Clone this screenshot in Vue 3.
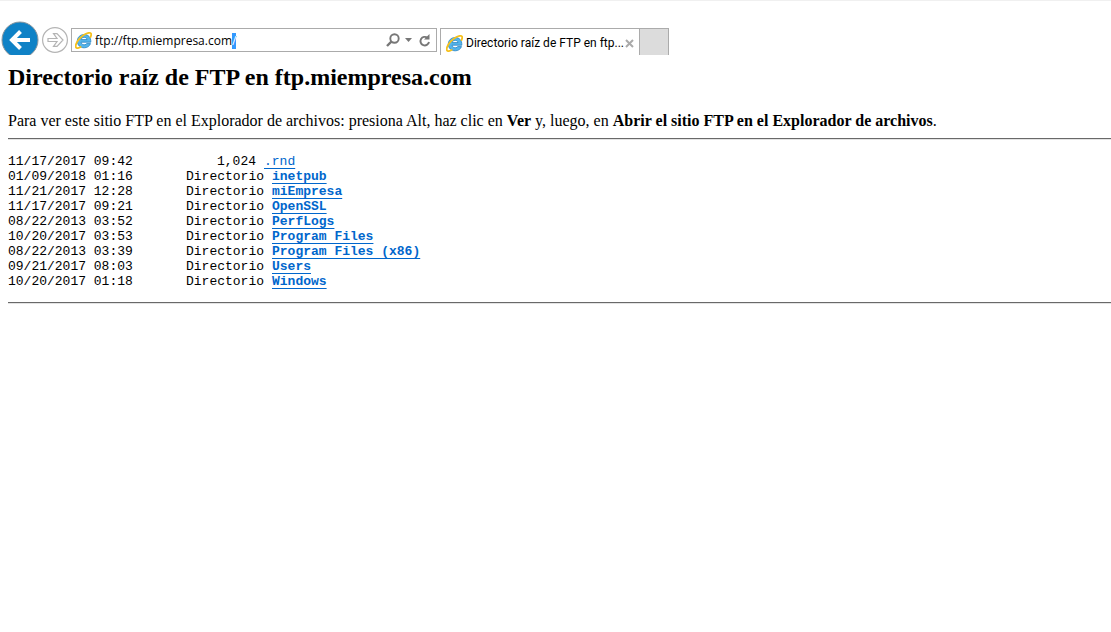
<script setup>
import { onMounted, ref } from 'vue'

const address = ref('ftp://ftp.miempresa.com/')
const addressBox = ref(null)

const entries = [
  { date: '11/17/2017 09:42', size: '1,024', name: '.rnd', file: true },
  { date: '01/09/2018 01:16', size: 'Directorio', name: 'inetpub' },
  { date: '11/21/2017 12:28', size: 'Directorio', name: 'miEmpresa' },
  { date: '11/17/2017 09:21', size: 'Directorio', name: 'OpenSSL' },
  { date: '08/22/2013 03:52', size: 'Directorio', name: 'PerfLogs' },
  { date: '10/20/2017 03:53', size: 'Directorio', name: 'Program Files' },
  { date: '08/22/2013 03:39', size: 'Directorio', name: 'Program Files (x86)' },
  { date: '09/21/2017 08:03', size: 'Directorio', name: 'Users' },
  { date: '10/20/2017 01:18', size: 'Directorio', name: 'Windows' }
]

onMounted(() => {
  const box = addressBox.value
  box.focus()
  box.setSelectionRange(address.value.length - 1, address.value.length)
})
</script>

<template>
  <div class="browser">
    <svg class="defs" width="0" height="0" aria-hidden="true">
      <symbol id="ie-logo" viewBox="0 0 17 17">
        <path d="M15.800 10.200H6.100c.1 1.600 1.400 2.600 3.100 2.600 1.100 0 2-.4 2.500-1.200h3.800c-.9 2.600-3.300 4.200-6.300 4.200-4 0-6.900-2.700-6.900-6.600s2.900-6.700 6.900-6.700c4.200 0 6.900 3 6.600 7.700zM12 7.600c-.2-1.400-1.300-2.300-2.900-2.300S6.400 6.200 6.200 7.600z" fill="#55b5ea" stroke="#2583c4" stroke-width=".8" />
        <path d="M15.500 5c1-2 1-3.500-.2-4C13.200.200 8 2.600 4.500 6.600 1.100 10.400-.1 14.500 1.300 15.800c.9.700 2.600.2 4.300-.8" fill="none" stroke="#f6c01c" stroke-width="1.800" stroke-linecap="round" />
      </symbol>
    </svg>

    <header class="toolbar">
      <button class="nav back" type="button" aria-label="Atrás">
        <svg width="38" height="38" viewBox="0 0 38 38">
          <circle cx="19" cy="19" r="18" fill="#0f82c6" stroke="#8c979e" />
          <path d="M11 19h18M19.500 10.500L11 19l8.500 8.500" fill="none" stroke="#fff" stroke-width="4" />
        </svg>
      </button>
      <button class="nav forward" type="button" aria-label="Adelante">
        <svg width="26" height="26" viewBox="0 0 26 26">
          <circle cx="13" cy="13" r="12.400" fill="#fff" stroke="#b4b4b4" stroke-width="1.200" />
          <path d="M6 11.500h9l-3.500-4.800h3.500l6 6.300-6 6.300h-3.500l3.500-4.800H6z" fill="#fff" stroke="#b4b4b4" stroke-width="1.200" />
        </svg>
      </button>

      <div class="address">
        <svg class="logo" width="17" height="17"><use href="#ie-logo" /></svg>
        <input ref="addressBox" v-model="address" type="text" aria-label="Dirección" spellcheck="false" />
        <button class="tool search" type="button" aria-label="Buscar">
          <svg width="14" height="14" viewBox="0 0 14 14" fill="none" stroke="#777">
            <circle cx="8.500" cy="5.500" r="4.200" stroke-width="1.900" />
            <path d="M5.600 8.400L1 13" stroke-width="2.400" />
          </svg>
        </button>
        <button class="tool drop" type="button" aria-label="Mostrar opciones">
          <svg width="7" height="4" viewBox="0 0 7 4"><path d="M0 0h7L3.500 4z" fill="#777" /></svg>
        </button>
        <button class="tool reload" type="button" aria-label="Actualizar">
          <svg width="12" height="13" viewBox="0 0 12 13">
            <path d="M8.500 3.800A4.300 4.300 0 1 0 10 8" fill="none" stroke="#777" stroke-width="1.900" />
            <path d="M10.500 0v5.500H5z" fill="#777" />
          </svg>
        </button>
      </div>

      <div class="tabs">
        <div class="tab">
          <svg class="logo" width="17" height="17"><use href="#ie-logo" /></svg>
          <span class="tab-title">Directorio raíz de FTP en ftp...</span>
          <button class="tool close" type="button" aria-label="Cerrar pestaña">
            <svg width="9" height="9" viewBox="0 0 9 9"><path d="M1 1l7 7M8 1L1 8" stroke="#aaa" stroke-width="2" /></svg>
          </button>
        </div>
        <button class="new-tab" type="button" aria-label="Nueva pestaña"></button>
      </div>
    </header>

    <main class="page">
      <h1>Directorio raíz de FTP en ftp.miempresa.com</h1>
      <p>
        Para ver este sitio FTP en el Explorador de archivos: presiona Alt, haz clic en <b>Ver</b> y, luego, en
        <b>Abrir el sitio FTP en el Explorador de archivos</b>.
      </p>
      <hr />
      <table class="listing" aria-label="Contenido del directorio">
        <tbody>
          <tr v-for="entry in entries" :key="entry.name" :class="{ file: entry.file }">
            <td class="date">{{ entry.date }}</td>
            <td class="size">{{ entry.size }}</td>
            <td class="name">
              <a :href="'#' + entry.name">{{ entry.name }}</a>
            </td>
          </tr>
        </tbody>
      </table>
      <hr />
    </main>
  </div>
</template>

<style>
body {
  background: #fff;
}
</style>

<style scoped>
.browser {
  border-top: 1px solid #f0f0f0;
  color: #000;
}

.defs {
  position: absolute;
}

button {
  padding: 0;
  border: 0;
  background: none;
}

svg {
  display: block;
}

.toolbar {
  display: flex;
  align-items: flex-start;
  height: 34px;
  padding: 20px 0 0 1px;
  overflow: hidden;
  font: 12px/16px "Open Sans", "Noto Sans", sans-serif;
}

.nav {
  flex: none;
}

.forward {
  margin: 6px 3px 0;
}

.address {
  box-sizing: border-box;
  display: flex;
  align-items: center;
  flex: 0 1 366px;
  min-width: 0;
  height: 24px;
  margin-top: 7px;
  padding: 0 5px 0 3px;
  border: 1px solid #ababab;
}

.logo {
  flex: none;
}

.address input {
  flex: 1;
  min-width: 0;
  height: 16px;
  margin-left: 3px;
  padding: 2px 0 0;
  border: 0;
  outline: 0;
  background: none;
  color: #000;
  caret-color: transparent;
  font: inherit;
}

.address input::selection {
  background: #3399ff;
  color: #fff;
}

.tool {
  flex: none;
}

.drop {
  margin: 0 7px 0 5px;
}

.tabs {
  display: flex;
  height: 27px;
  margin: 7px 0 0 3px;
}

.tab {
  box-sizing: border-box;
  display: flex;
  align-items: center;
  width: 200px;
  padding: 2px 5px 0;
  border: solid #ababab;
  border-width: 1px 1px 0;
}

.tab-title {
  flex: 1;
  min-width: 0;
  margin-left: 3px;
  font-family: Roboto, "Open Sans", sans-serif;
  white-space: nowrap;
}

.new-tab {
  box-sizing: border-box;
  width: 29px;
  border: solid #ababab;
  border-width: 1px 1px 0 0;
  background: #dcdcdc;
}

.page {
  padding-left: 8px;
  font: 16px/18px "Liberation Serif", "Times New Roman", serif;
}

h1 {
  margin: 0;
  padding-top: 8px;
  font-size: 24px;
  line-height: 28px;
}

p {
  margin: 21px 0 8px;
}

hr {
  margin: 0;
  border: 0;
  border-top: 1px solid #696969;
  border-bottom: 1px solid #e3e3e3;
}

.listing {
  margin: 14px 0 13px;
  border-collapse: collapse;
  font: 13px/15px "Liberation Mono", "Courier New", monospace;
}

.listing td {
  padding: 0;
  white-space: nowrap;
}

.listing .date {
  width: 128px;
}

.listing .size {
  width: 128px;
  text-align: right;
}

.listing .name {
  padding-left: 8px;
  font-weight: bold;
}

.listing .file .size {
  padding-right: 8px;
  width: 120px;
}

.listing .file .name {
  padding-left: 0;
  font-weight: normal;
}

a {
  color: #0066cc;
  text-underline-offset: 3px;
}
</style>
